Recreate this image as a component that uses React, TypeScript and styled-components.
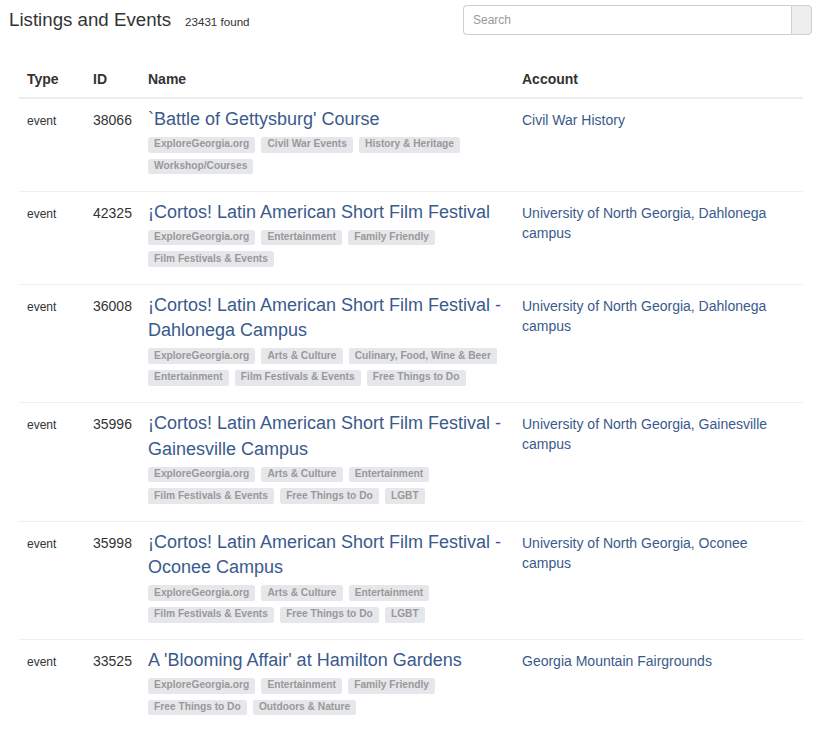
import styled, { createGlobalStyle } from 'styled-components';

const GlobalStyle = createGlobalStyle`
  html, body {
    margin: 0;
    padding: 0;
    background: #fff;
  }
  body {
    font-family: 'Liberation Sans', Arial, sans-serif;
    font-size: 14px;
    line-height: 1.42857;
    color: #333;
  }
`;

const Page = styled.div`
  width: 822px;
  padding-bottom: 20px;
`;

const TopBar = styled.div`
  display: flex;
  justify-content: space-between;
  align-items: flex-start;
  padding: 5px 10px 0 9px;
`;

const TitleGroup = styled.div`
  display: flex;
  align-items: baseline;
  gap: 14px;
`;

const Title = styled.h1`
  margin: 0;
  font-size: 18.7px;
  font-weight: 400;
  line-height: 30px;
  color: #333;
`;

const Count = styled.span`
  font-size: 11.6px;
  color: #333;
`;

const SearchGroup = styled.div`
  display: flex;
  height: 30px;
`;

const SearchInput = styled.input`
  box-sizing: border-box;
  width: 328px;
  height: 30px;
  padding: 0 9px;
  border: 1px solid #cfcfd8;
  border-right: none;
  border-radius: 4px 0 0 4px;
  font-family: 'Liberation Sans', Arial, sans-serif;
  font-size: 12px;
  color: #555;
  outline: none;
  &::placeholder {
    color: #999;
  }
`;

const SearchAddon = styled.span`
  box-sizing: border-box;
  width: 21px;
  height: 30px;
  background: #eee;
  border: 1px solid #cfcfd8;
  border-radius: 0 4px 4px 0;
`;

const Table = styled.table`
  margin: 26px 0 0 19px;
  width: 784px;
  border-collapse: collapse;
  table-layout: fixed;
`;

const HeadCell = styled.th`
  padding: 8px;
  text-align: left;
  font-weight: 700;
  font-size: 14px;
  line-height: 20px;
  border-bottom: 2px solid #eee;
`;

const Cell = styled.td<{ $small?: boolean }>`
  padding: 8px;
  vertical-align: baseline;
  border-top: 1px solid #eee;
  font-size: ${(p) => (p.$small ? '12px' : '14px')};
  line-height: 20px;
`;

const NameLink = styled.a`
  display: block;
  font-size: 18px;
  line-height: 25.7px;
  color: #3a5a8c;
  text-decoration: none;
`;

const Tags = styled.div`
  display: flex;
  flex-wrap: wrap;
  column-gap: 6px;
  row-gap: 6px;
  padding: 4px 0 8.5px;
`;

const Tag = styled.span`
  display: inline-block;
  font-size: 10.2px;
  font-weight: 700;
  line-height: 1;
  padding: 0.25em 0.6em 0.3em;
  border-radius: 0.25em;
  background: #e6e7ea;
  color: #999;
  white-space: nowrap;
`;

const AccountLink = styled.a`
  color: #3a5a8c;
  text-decoration: none;
`;

type Row = {
  id: number;
  name: string;
  tags: string[];
  account: string;
};

const rows: Row[] = [
  {
    id: 38066,
    name: "`Battle of Gettysburg' Course",
    tags: ['ExploreGeorgia.org', 'Civil War Events', 'History & Heritage', 'Workshop/Courses'],
    account: 'Civil War History',
  },
  {
    id: 42325,
    name: '¡Cortos! Latin American Short Film Festival',
    tags: ['ExploreGeorgia.org', 'Entertainment', 'Family Friendly', 'Film Festivals & Events'],
    account: 'University of North Georgia, Dahlonega campus',
  },
  {
    id: 36008,
    name: '¡Cortos! Latin American Short Film Festival - Dahlonega Campus',
    tags: [
      'ExploreGeorgia.org',
      'Arts & Culture',
      'Culinary, Food, Wine & Beer',
      'Entertainment',
      'Film Festivals & Events',
      'Free Things to Do',
    ],
    account: 'University of North Georgia, Dahlonega campus',
  },
  {
    id: 35996,
    name: '¡Cortos! Latin American Short Film Festival - Gainesville Campus',
    tags: [
      'ExploreGeorgia.org',
      'Arts & Culture',
      'Entertainment',
      'Film Festivals & Events',
      'Free Things to Do',
      'LGBT',
    ],
    account: 'University of North Georgia, Gainesville campus',
  },
  {
    id: 35998,
    name: '¡Cortos! Latin American Short Film Festival - Oconee Campus',
    tags: [
      'ExploreGeorgia.org',
      'Arts & Culture',
      'Entertainment',
      'Film Festivals & Events',
      'Free Things to Do',
      'LGBT',
    ],
    account: 'University of North Georgia, Oconee campus',
  },
  {
    id: 33525,
    name: "A 'Blooming Affair' at Hamilton Gardens",
    tags: ['ExploreGeorgia.org', 'Entertainment', 'Family Friendly', 'Free Things to Do', 'Outdoors & Nature'],
    account: 'Georgia Mountain Fairgrounds',
  },
];

export default function App() {
  return (
    <Page>
      <GlobalStyle />
      <TopBar>
        <TitleGroup>
          <Title>Listings and Events</Title>
          <Count>23431 found</Count>
        </TitleGroup>
        <SearchGroup>
          <SearchInput placeholder="Search" />
          <SearchAddon />
        </SearchGroup>
      </TopBar>

      <Table>
        <colgroup>
          <col style={{ width: 66 }} />
          <col style={{ width: 55 }} />
          <col style={{ width: 374 }} />
          <col />
        </colgroup>
        <thead>
          <tr>
            <HeadCell>Type</HeadCell>
            <HeadCell>ID</HeadCell>
            <HeadCell>Name</HeadCell>
            <HeadCell>Account</HeadCell>
          </tr>
        </thead>
        <tbody>
          {rows.map((r) => (
            <tr key={r.id}>
              <Cell $small>event</Cell>
              <Cell>{r.id}</Cell>
              <Cell>
                <NameLink href="#">{r.name}</NameLink>
                <Tags>
                  {r.tags.map((t) => (
                    <Tag key={t}>{t}</Tag>
                  ))}
                </Tags>
              </Cell>
              <Cell>
                <AccountLink href="#">{r.account}</AccountLink>
              </Cell>
            </tr>
          ))}
        </tbody>
      </Table>
    </Page>
  );
}
